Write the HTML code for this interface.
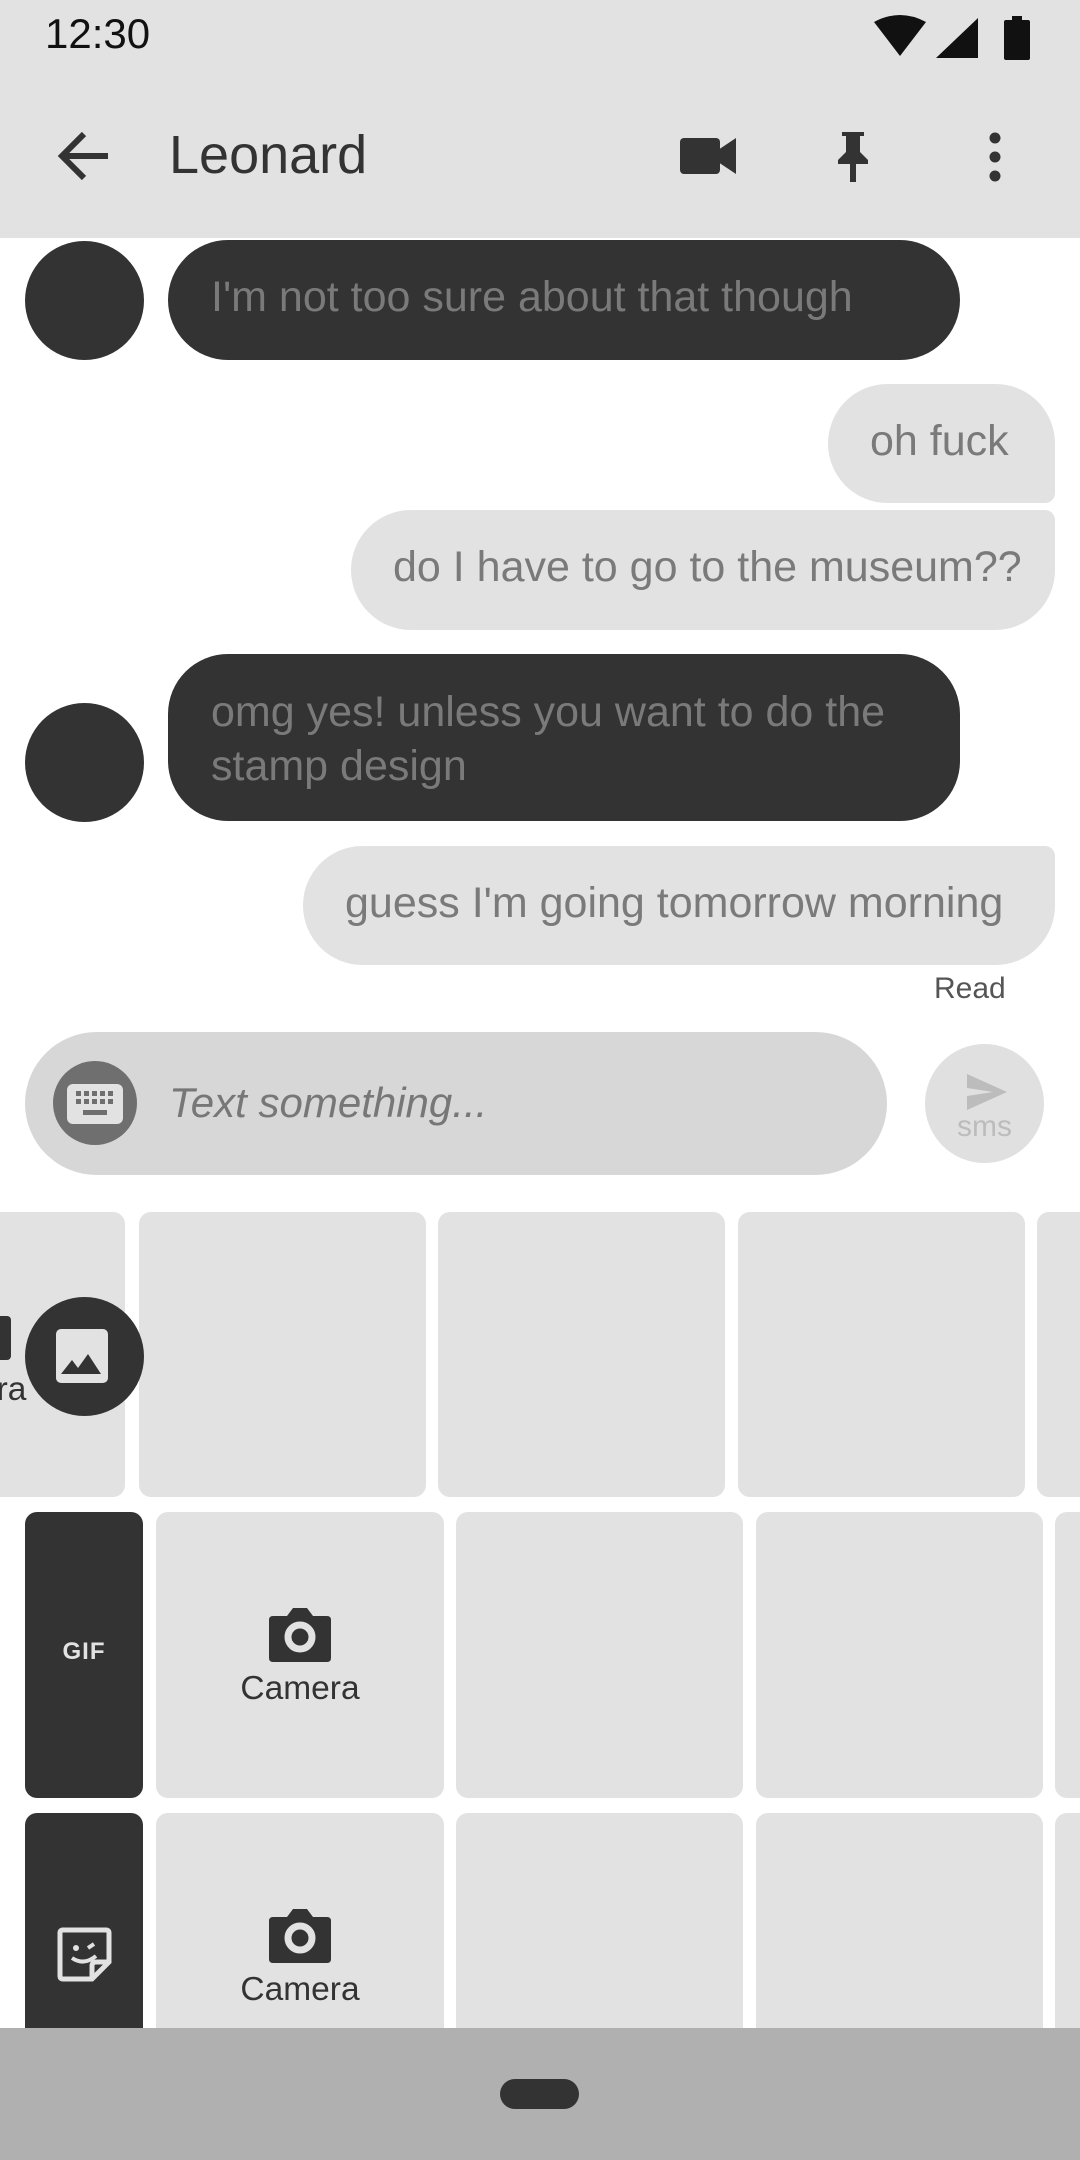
<!DOCTYPE html>
<html><head><meta charset="utf-8"><style>
*{margin:0;padding:0;box-sizing:border-box}
body{width:1080px;height:2160px;position:relative;overflow:hidden;background:#fff;font-family:"Liberation Sans",sans-serif}
.a{position:absolute}
.dk{background:#333}
.lt{background:#e2e2e2}
.t{color:#7a7a7a;font-size:43px;white-space:nowrap}
.tile{position:absolute;background:#e2e2e2;border-radius:12px}
.cam{position:absolute;left:0;right:0;text-align:center;font-size:33.5px;color:#333}
</style></head><body>
<div class="a" style="left:0;top:0;width:1080px;height:238px;background:#e2e2e2"></div>
<div class="a" style="left:45px;top:10px;font-size:42px;color:#111">12:30</div>
<svg class="a" style="left:872px;top:14px" width="170" height="46" viewBox="0 0 170 46">
<path d="M2 8 Q28 -6 54 8 L28 42 Z" fill="#111"/>
<path d="M64 44 L106 4 L106 44 Z" fill="#111"/>
<rect x="132" y="6" width="26" height="40" rx="2" fill="#111"/><rect x="140" y="2" width="10" height="6" fill="#111"/>
</svg>
<svg class="a" style="left:56px;top:130px" width="56" height="52" viewBox="0 0 56 52"><path d="M52 26 H8 M28 4 L6 26 L28 48" stroke="#333" stroke-width="6" fill="none"/></svg>
<div class="a" style="left:169px;top:124px;font-size:54px;color:#333">Leonard</div>
<svg class="a" style="left:680px;top:136px" width="56" height="40" viewBox="0 0 56 40"><rect x="0" y="2" width="40" height="36" rx="4" fill="#333"/><path d="M38 14 L56 2 V38 L38 26Z" fill="#333"/></svg>
<svg class="a" style="left:836px;top:130px" width="34" height="54" viewBox="0 0 34 54"><path d="M6 2 H28 V6 H24 V22 L32 30 V34 H20 V52 H14 V34 H2 V30 L10 22 V6 H6 Z" fill="#333"/></svg>
<svg class="a" style="left:986px;top:132px" width="18" height="50" viewBox="0 0 18 50"><circle cx="9" cy="6" r="5.5" fill="#333"/><circle cx="9" cy="25" r="5.5" fill="#333"/><circle cx="9" cy="44" r="5.5" fill="#333"/></svg>

<div class="a dk" style="left:25px;top:241px;width:119px;height:119px;border-radius:50%"></div>
<div class="a dk" style="left:168px;top:240px;width:792px;height:120px;border-radius:60px"></div>
<div class="a t" style="left:211px;top:273px">I'm not too sure about that though</div>

<div class="a lt" style="left:828px;top:384px;width:227px;height:119px;border-radius:60px 60px 10px 60px"></div>
<div class="a t" style="left:870px;top:417px">oh fuck</div>
<div class="a lt" style="left:351px;top:510px;width:704px;height:120px;border-radius:60px 10px 60px 60px"></div>
<div class="a t" style="left:393px;top:543px">do I have to go to the museum??</div>

<div class="a dk" style="left:25px;top:703px;width:119px;height:119px;border-radius:50%"></div>
<div class="a dk" style="left:168px;top:654px;width:792px;height:167px;border-radius:60px"></div>
<div class="a t" style="left:211px;top:685px;line-height:54px">omg yes! unless you want to do the<br>stamp design</div>

<div class="a lt" style="left:303px;top:846px;width:752px;height:119px;border-radius:60px 10px 60px 60px"></div>
<div class="a t" style="left:345px;top:879px">guess I'm going tomorrow morning</div>
<div class="a" style="left:934px;top:972px;font-size:30px;color:#555">Read</div>

<div class="a" style="left:25px;top:1032px;width:862px;height:143px;border-radius:72px;background:#d7d7d7"></div>
<div class="a" style="left:53px;top:1061px;width:84px;height:84px;border-radius:50%;background:#6f6f6f"></div>
<svg class="a" style="left:66px;top:1083px" width="58" height="42" viewBox="0 0 58 42"><rect x="1" y="1" width="56" height="40" rx="6" fill="#e2e2e2"/><g fill="#6f6f6f"><rect x="10" y="8" width="5" height="5"/><rect x="18" y="8" width="5" height="5"/><rect x="26" y="8" width="5" height="5"/><rect x="34" y="8" width="5" height="5"/><rect x="42" y="8" width="5" height="5"/><rect x="10" y="16" width="5" height="5"/><rect x="18" y="16" width="5" height="5"/><rect x="26" y="16" width="5" height="5"/><rect x="34" y="16" width="5" height="5"/><rect x="42" y="16" width="5" height="5"/><rect x="17" y="27" width="24" height="5"/></g></svg>
<div class="a" style="left:169px;top:1079px;font-size:42px;font-style:italic;color:#777">Text something...</div>
<div class="a" style="left:925px;top:1044px;width:119px;height:119px;border-radius:50%;background:#e0e0e0"></div>
<svg class="a" style="left:965px;top:1072px" width="44" height="40" viewBox="0 0 44 40"><path d="M2 2 L42 20 L2 38 L2 24 L28 20 L2 16 Z" fill="#bcbcbc"/></svg>
<div class="a" style="left:925px;top:1110px;width:119px;text-align:center;font-size:30px;color:#bcbcbc">sms</div>

<div class="tile" style="left:-12px;top:1212px;width:137px;height:285px"></div>
<div class="a dk" style="left:0;top:1316px;width:11px;height:44px;border-radius:0 4px 4px 0"></div>
<div class="a" style="left:-22px;top:1371px;font-size:33.5px;color:#333">era</div>
<div class="tile" style="left:139px;top:1212px;width:287px;height:285px"></div>
<div class="tile" style="left:438px;top:1212px;width:287px;height:285px"></div>
<div class="tile" style="left:738px;top:1212px;width:287px;height:285px"></div>
<div class="tile" style="left:1037px;top:1212px;width:80px;height:285px"></div>
<div class="a dk" style="left:25px;top:1297px;width:119px;height:119px;border-radius:50%"></div>
<svg class="a" style="left:55px;top:1328px" width="56" height="56" viewBox="0 0 56 56"><rect x="1" y="1" width="52" height="54" rx="5" fill="#e2e2e2"/><path d="M6 46 L17 32 L23 40 L33 26 L46 46 Z" fill="#333"/></svg>

<div class="tile" style="left:25px;top:1512px;width:118px;height:286px;background:#333"></div>
<div class="a" style="left:25px;top:1638px;width:118px;text-align:center;font-size:24px;font-weight:bold;color:#e2e2e2;letter-spacing:1px">GIF</div>
<div class="tile" style="left:156px;top:1512px;width:288px;height:286px"><svg class="a" style="left:113px;top:94px" width="62" height="56" viewBox="0 0 62 56"><path d="M4 10 H18 L24 2 H38 L44 10 H58 Q62 10 62 14 V52 Q62 56 58 56 H4 Q0 56 0 52 V14 Q0 10 4 10Z" fill="#333"/><circle cx="31" cy="31" r="12" fill="none" stroke="#e2e2e2" stroke-width="7"/></svg><div class="cam" style="top:158px">Camera</div></div>
<div class="tile" style="left:456px;top:1512px;width:287px;height:286px"></div>
<div class="tile" style="left:756px;top:1512px;width:287px;height:286px"></div>
<div class="tile" style="left:1055px;top:1512px;width:60px;height:286px"></div>

<div class="tile" style="left:25px;top:1813px;width:118px;height:286px;background:#333"></div>
<svg class="a" style="left:56px;top:1926px" width="56" height="56" viewBox="0 0 56 56"><path d="M6 4 H50 Q53 4 53 7 V36 L36 53 H7 Q4 53 4 50 V7 Q4 4 7 4Z M53 36 H40 Q36 36 36 40 V53" fill="none" stroke="#e2e2e2" stroke-width="5"/><circle cx="20" cy="22" r="3" fill="#e2e2e2"/><path d="M32 22 L38 18" stroke="#e2e2e2" stroke-width="4"/><path d="M16 32 Q28 40 40 30" fill="none" stroke="#e2e2e2" stroke-width="4"/></svg>
<div class="tile" style="left:156px;top:1813px;width:288px;height:286px"><svg class="a" style="left:113px;top:94px" width="62" height="56" viewBox="0 0 62 56"><path d="M4 10 H18 L24 2 H38 L44 10 H58 Q62 10 62 14 V52 Q62 56 58 56 H4 Q0 56 0 52 V14 Q0 10 4 10Z" fill="#333"/><circle cx="31" cy="31" r="12" fill="none" stroke="#e2e2e2" stroke-width="7"/></svg><div class="cam" style="top:158px">Camera</div></div>
<div class="tile" style="left:456px;top:1813px;width:287px;height:286px"></div>
<div class="tile" style="left:756px;top:1813px;width:287px;height:286px"></div>
<div class="tile" style="left:1055px;top:1813px;width:60px;height:286px"></div>

<div class="a" style="left:0;top:2028px;width:1080px;height:132px;background:#b0b0b0"></div>
<div class="a" style="left:500px;top:2079px;width:79px;height:30px;border-radius:15px;background:#333"></div>
</body></html>
